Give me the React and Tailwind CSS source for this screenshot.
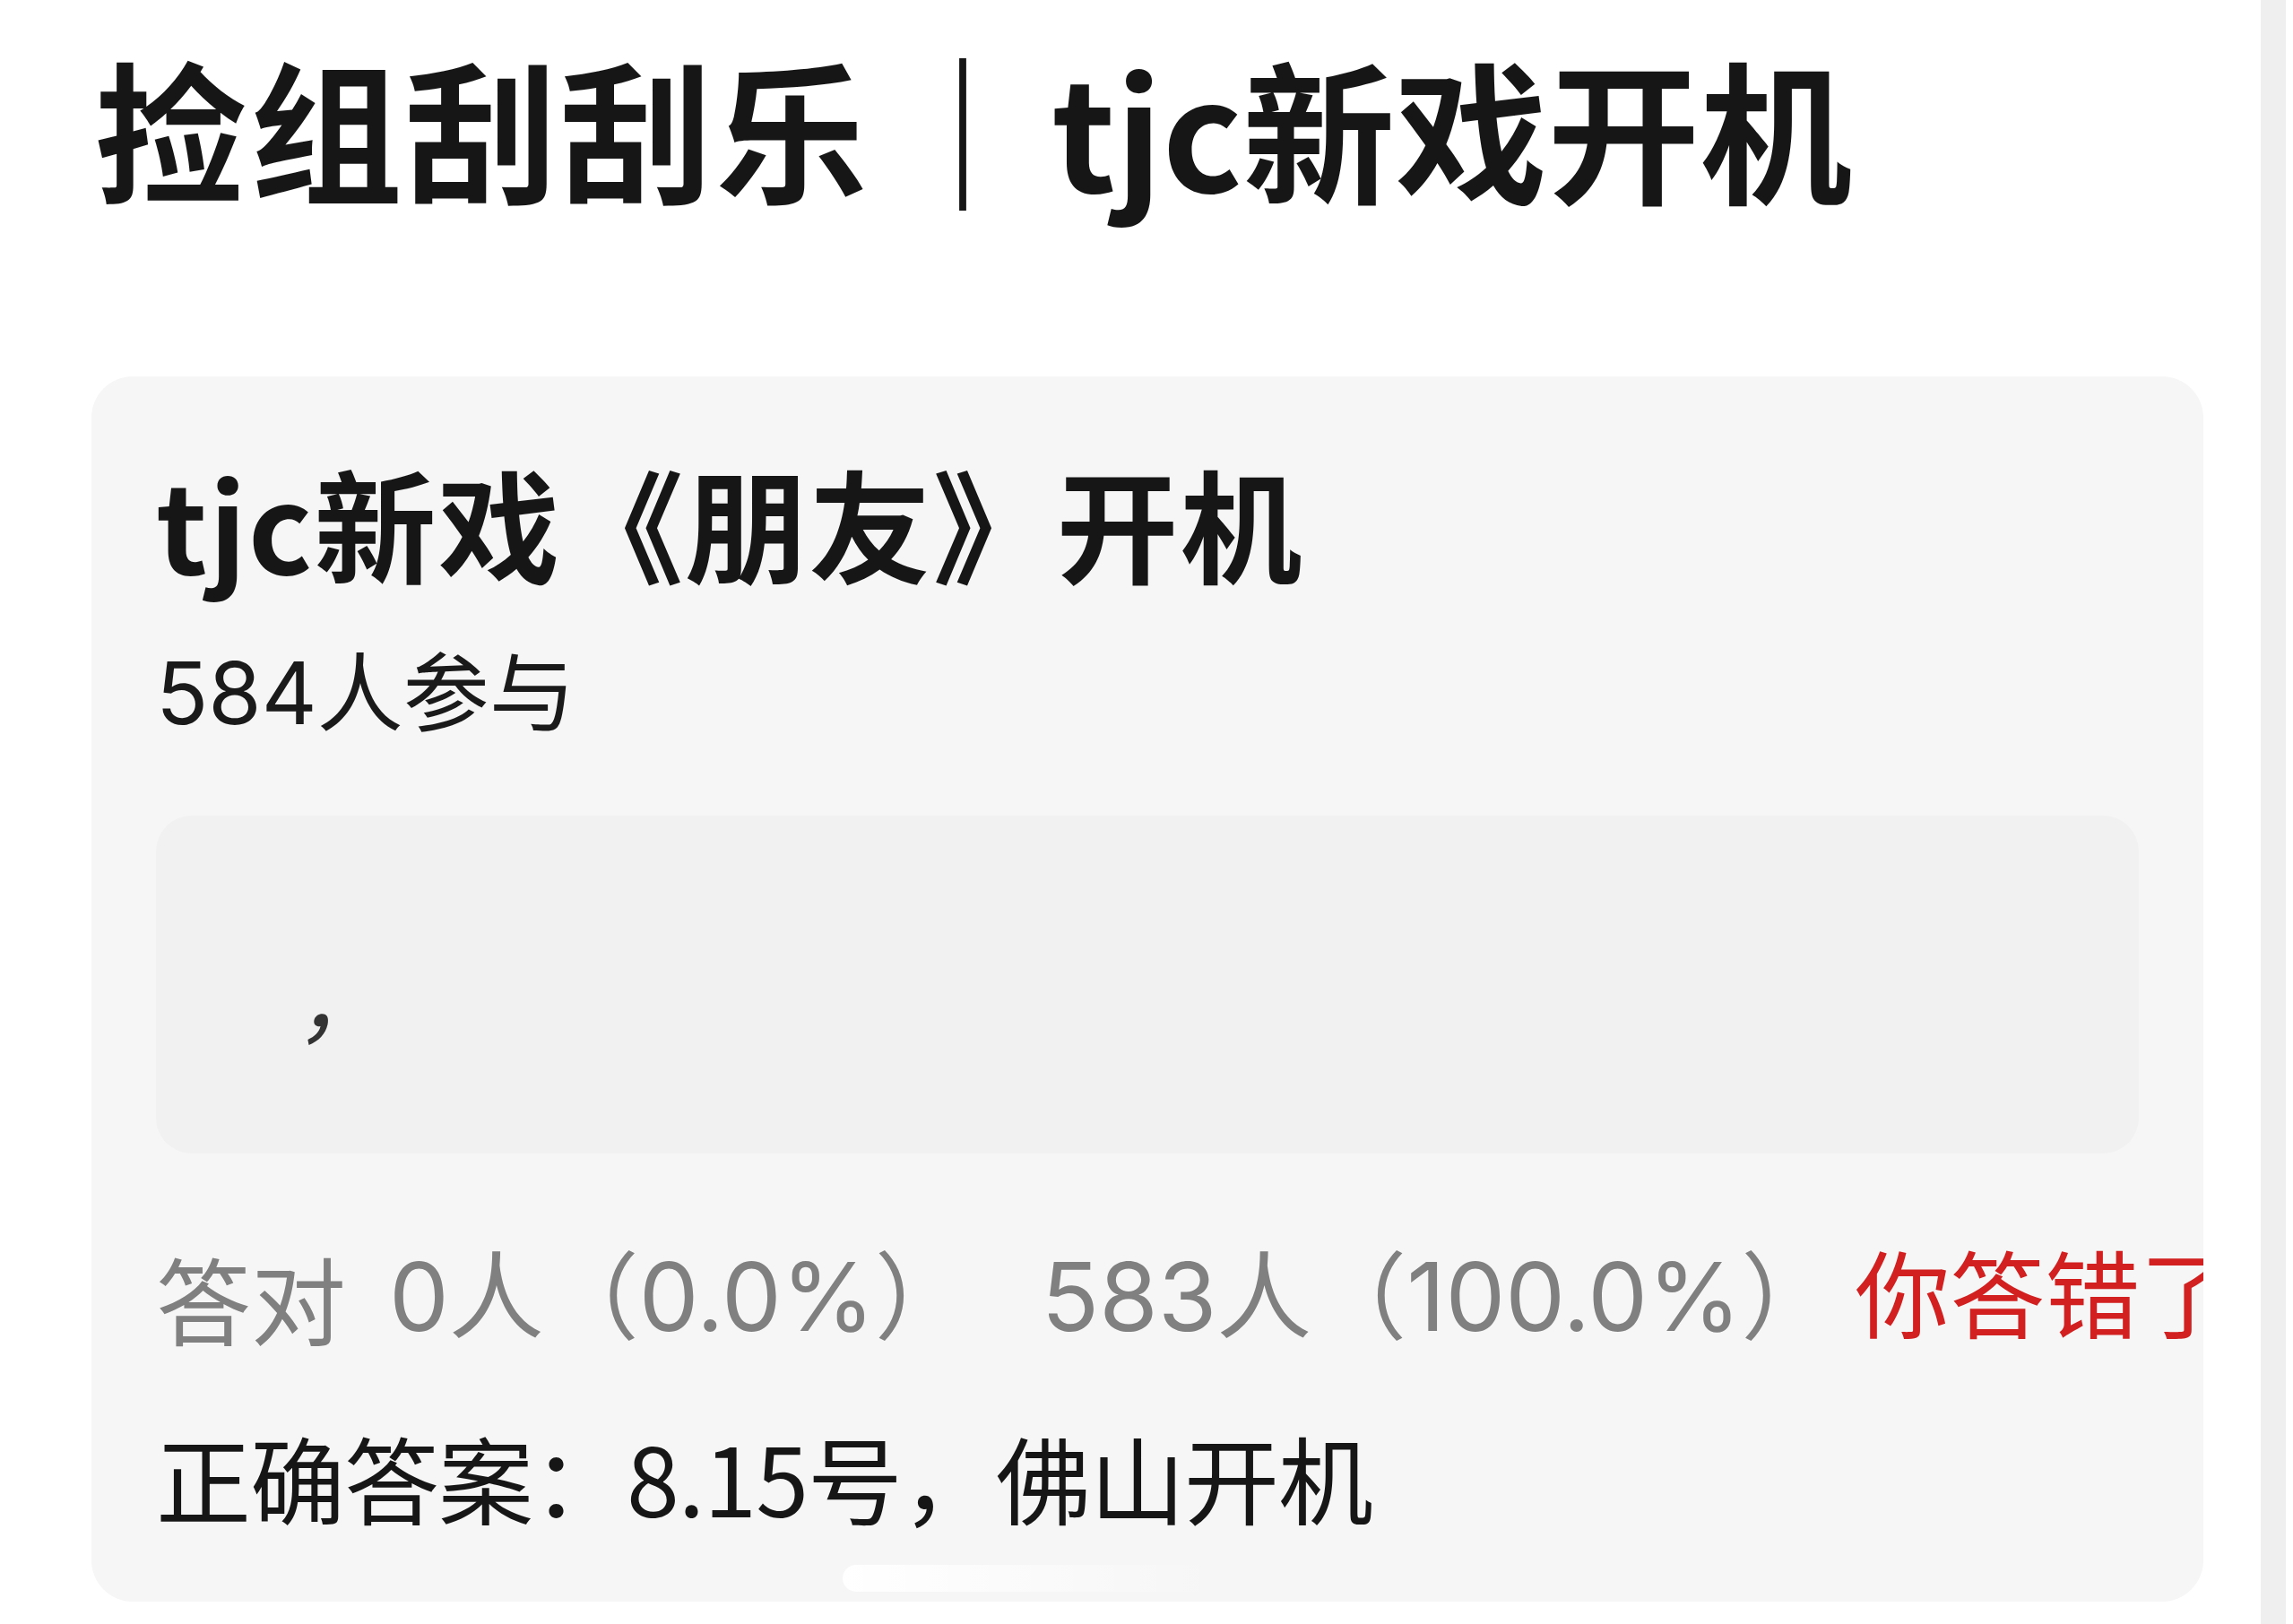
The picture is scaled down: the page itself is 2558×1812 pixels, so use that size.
const cjk = "font-['Noto_Sans_CJK_SC',sans-serif]";
const num = "font-['Inter','Noto_Sans_CJK_SC',sans-serif]";

function Stats() {
    return (
        <div className={`mt-[107px] flex whitespace-nowrap text-[106px] leading-none ${num}`}>
            <span className={`text-[#808080] ${cjk}`}>答对</span>
            <span className="ml-[48px] text-[#808080]">0人（0.0%）</span>
            <span className="ml-[80px] text-[#808080]">583人（100.0%）</span>
            <span className="ml-[21px] text-[#d21f1f]">你答错了</span>
        </div>
    );
}

export default function App() {
    return (
        <div className={`flex h-[1812px] w-[2558px] bg-white ${cjk}`}>
            <div className="w-[2522px] shrink-0">
                <h1 className="flex pt-[56px] pl-[106px] text-[170px] font-bold leading-none text-[#161616] whitespace-nowrap">
                    <span className="tracking-[3px]">捡组刮刮乐</span>
                    <span className="ml-[18px]">｜</span>
                    <span className="ml-[14px]">tjc新戏开机</span>
                </h1>

                {/* quiz result card */}
                <div className="relative ml-[102px] mt-[194px] w-[2356px] overflow-hidden rounded-[46px] bg-[#f6f6f6] px-[72px] pt-[94px] pb-[87px]">
                    <h2 className="text-[136px] font-bold leading-none tracking-[2px] text-[#161616] whitespace-nowrap">
                        tjc新戏《朋友》开机
                    </h2>
                    <p className={`mt-[75px] text-[96px] leading-none text-[#1a1a1a] ${num}`}>584人参与</p>

                    <div className="mt-[89px] h-[377px] rounded-[40px] bg-[#f1f1f1] pl-[177px] pt-[132px]">
                        <span className="inline-block -skew-x-12 text-[110px] leading-none text-[#333333]">,</span>
                    </div>

                    <Stats/>

                    <p className="mt-[94px] text-[106px] leading-none tracking-[-1px] text-[#161616] whitespace-nowrap">
                        正确答案：8.15号，佛山开机
                    </p>

                    <div className="absolute left-[838px] top-[1326px] h-[30px] w-[420px] rounded-full bg-linear-to-r from-white to-white/0"/>
                </div>
            </div>
            <div className="w-[28px] shrink-0 bg-[#efefef]"/>
        </div>
    );
}
